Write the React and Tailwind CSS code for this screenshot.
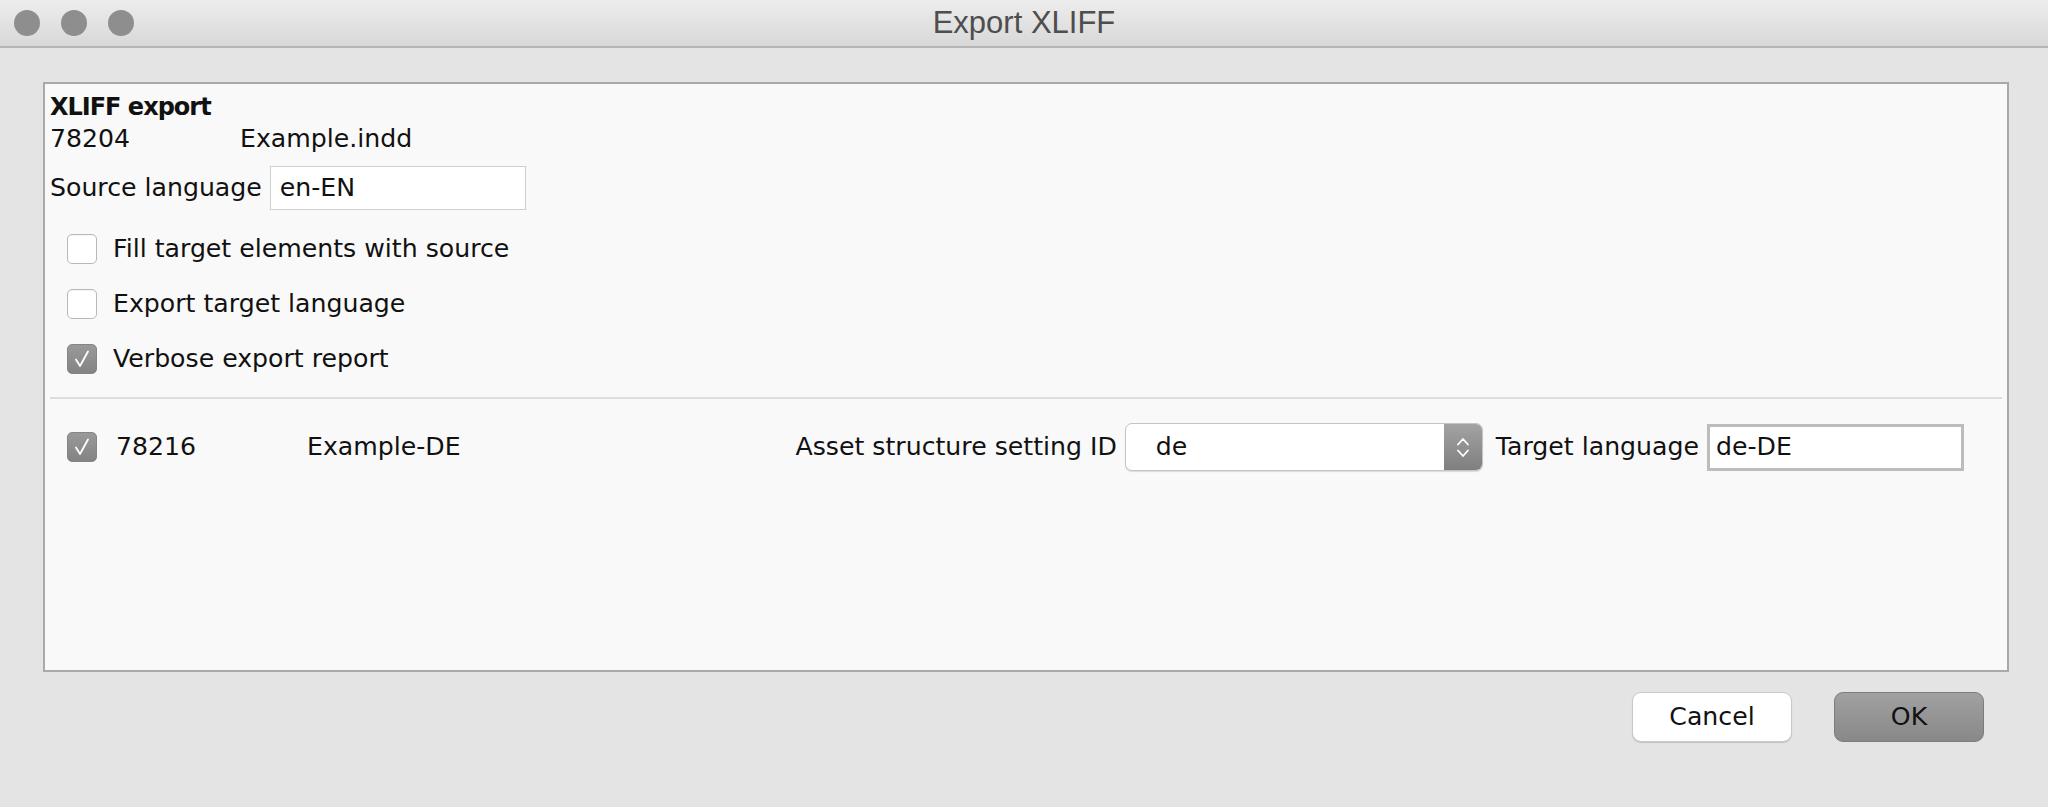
import React from "react";

const body = { fontFamily: '"DejaVu Sans", "Liberation Sans", sans-serif' };

function CheckBox({ checked }) {
  if (checked) {
    return (
      <div className="flex h-[30px] w-[30px] shrink-0 items-center justify-center rounded-[5px] border border-[#858585] bg-gradient-to-b from-[#9a9a9a] to-[#838383]">
        <svg width="22" height="22" viewBox="0 0 22 22" fill="none">
          <path d="M5 11.5 L9 18 L17 3.5" stroke="#fff" strokeWidth="1.8" strokeLinecap="round" strokeLinejoin="round" />
        </svg>
      </div>
    );
  }
  return <div className="h-[30px] w-[30px] shrink-0 rounded-[5px] border border-[#b8b8b8] bg-white shadow-[inset_0_1px_1px_rgba(0,0,0,0.05)]" />;
}

function CheckRow({ checked, label }) {
  return (
    <div className="flex h-[55px] items-center pl-[22px]">
      <CheckBox checked={checked} />
      <span className="ml-[16px]">{label}</span>
    </div>
  );
}

export default function App() {
  return (
    <div className="flex h-[807px] w-[2048px] flex-col bg-[#e4e4e4] text-[25.2px] text-[#111]" style={body}>
      {/* Title bar */}
      <div className="grid h-[48px] grid-cols-[1fr_auto_1fr] items-center border-b-2 border-[#b5b5b5] bg-gradient-to-b from-[#ededed] to-[#d8d8d8]">
        <div className="flex items-center gap-[21px] pl-[14px]">
          <div className="h-[26px] w-[26px] rounded-full bg-[#8e8e8e]" />
          <div className="h-[26px] w-[26px] rounded-full bg-[#8e8e8e]" />
          <div className="h-[26px] w-[26px] rounded-full bg-[#8e8e8e]" />
        </div>
        <div className="text-[31px] text-[#4e4e4e]" style={{ fontFamily: '"Liberation Sans", Arial, sans-serif' }}>
          Export XLIFF
        </div>
        <div />
      </div>

      {/* Content */}
      <div className="flex flex-1 flex-col pl-[43px] pr-[39px] pt-[34px]">
        <div className="flex h-[590px] flex-col border-2 border-[#a9a9a9] bg-[#f9f9f9] pt-[7px]">
          <div className="pl-[5px] leading-[32px]">
            <div className="text-[24px] font-bold tracking-[-1px]">XLIFF export</div>
            <div className="flex">
              <span className="w-[190px]">78204</span>
              <span>Example.indd</span>
            </div>
            <div className="mt-[11px] flex items-center">
              <span>Source language</span>
              <div className="ml-[8px] flex h-[44px] w-[256px] items-center border border-[#cfcfcf] bg-white pl-[9px]">en-EN</div>
            </div>
          </div>

          <div className="mt-[11px]">
            <CheckRow label="Fill target elements with source" />
            <CheckRow label="Export target language" />
            <CheckRow checked label="Verbose export report" />
          </div>

          <div className="mx-[5px] mt-[11px] h-[2px] bg-[#dedede]" />

          <div className="mt-[24px] flex h-[48px] items-center pl-[22px] pr-[43px]">
            <CheckBox checked />
            <span className="ml-[19px] w-[191px]">78216</span>
            <span className="flex-1">Example-DE</span>
            <span>Asset structure setting ID</span>
            <div className="ml-[8px] flex h-[48px] w-[358px] overflow-hidden rounded-[7px] border border-[#c4c4c4] bg-white shadow-[0_1px_1px_rgba(0,0,0,0.12)]">
              <div className="flex flex-1 items-center pl-[30px]">de</div>
              <div className="flex w-[38px] flex-col items-center justify-center gap-[3px] bg-gradient-to-b from-[#a3a3a3] to-[#7f7f7f]">
                <svg width="14" height="9" viewBox="0 0 14 9" fill="none">
                  <path d="M2 7.5 L7 2 L12 7.5" stroke="#fff" strokeWidth="1.8" strokeLinecap="round" strokeLinejoin="round" />
                </svg>
                <svg width="14" height="9" viewBox="0 0 14 9" fill="none">
                  <path d="M2 1.5 L7 7 L12 1.5" stroke="#fff" strokeWidth="1.8" strokeLinecap="round" strokeLinejoin="round" />
                </svg>
              </div>
            </div>
            <span className="ml-[13px]">Target language</span>
            <div className="ml-[8px] flex h-[47px] w-[257px] items-center border-[3px] border-[#bcbcbc] bg-white pl-[6px]">de-DE</div>
          </div>
        </div>

        {/* Buttons */}
        <div className="mt-[20px] flex justify-end gap-[42px] pr-[25px]">
          <button className="h-[50px] w-[160px] rounded-[9px] border border-[#c9c9c9] bg-white text-[25.2px] text-[#111] shadow-[0_1px_1px_rgba(0,0,0,0.15)]" style={body}>
            Cancel
          </button>
          <button className="h-[50px] w-[150px] rounded-[9px] border border-[#7c7c7c] bg-gradient-to-b from-[#a1a1a1] to-[#888888] text-[25.2px] text-[#111]" style={body}>
            OK
          </button>
        </div>
      </div>
    </div>
  );
}
